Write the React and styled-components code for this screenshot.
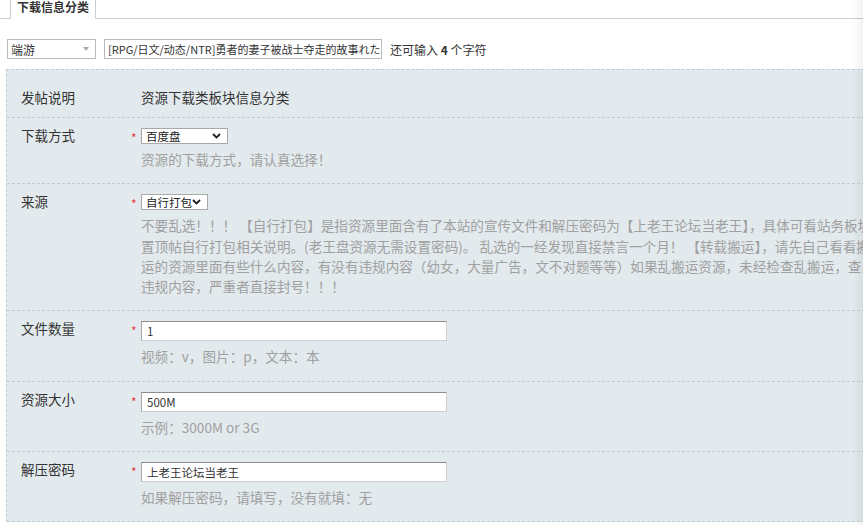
import React from 'react'
import styled, { createGlobalStyle } from 'styled-components'

const GlobalStyle = createGlobalStyle`
html, body {
  margin: 0;
  padding: 0;
  background: #fff;
  overflow: hidden;
}
body {
  font-family: "Noto Sans CJK SC", "Noto Sans", "Liberation Sans", sans-serif;
  color: #333;
}
`;

const Page = styled.div`
width: 1000px;
position: relative;
`;

const EdgeShade = styled.div`
position: fixed;
top: 0;
right: 0;
width: 10px;
height: 100%;
background: linear-gradient(to right, rgba(0,0,0,0), rgba(0,0,0,0.05));
pointer-events: none;
`;

const TabBar = styled.div`
display: flex;
margin-top: -7px;
padding-left: 10px;
border-bottom: 1px solid #cdcdcd;
`;

const Tab = styled.div`
background: #fff;
border: 1px solid #cdcdcd;
border-bottom: none;
margin-bottom: -1px;
padding: 0 6px;
line-height: 25px;
font-size: 12px;
font-weight: bold;
color: #333;
`;

const TitleRow = styled.div`
display: flex;
align-items: center;
gap: 8px;
padding: 20px 0 0 7px;
height: 20px;
`;

const TypeSelect = styled.div`
width: 78px;
height: 18px;
border: 1px solid #b9b9b9;
display: flex;
align-items: center;
justify-content: space-between;
padding: 0 6px 0 3px;
font-size: 12px;
color: #333;
background: #fff;
`;

const Caret = styled.span`
width: 0;
height: 0;
border-left: 3px solid transparent;
border-right: 3px solid transparent;
border-top: 4px solid #aaa;
`;

const TitleInput = styled.div`
width: 270px;
height: 18px;
padding: 0 3px;
border: 1px solid #b9b9b9;
font-size: 11px;
line-height: 18px;
white-space: nowrap;
overflow: hidden;
color: #333;
`;

const Counter = styled.span`
font-size: 12px;
color: #333;
b { font-weight: bold; }
`;

const Panel = styled.div`
margin: 10px 0 0 6px;
border-top: 1px dashed #c3ccd2;
border-left: 1px dashed #c3ccd2;
background: #e3eaee;
padding-top: 7px;
`;

const Row = styled.div`
display: grid;
grid-template-columns: 110px 10px 1fr;
padding: 10px 0 ${({ plain }) => (plain ? '10px' : '14px')} 14px;
border-bottom: 1px dashed #c3ccd2;
`;

const Label = styled.div`
font-size: 13.5px;
line-height: ${({ plain }) => (plain ? '20px' : '15px')};
color: #333;
`;

const Star = styled.span`
color: #e4393c;
font-size: 12px;
line-height: 14px;
padding-top: 3px;
`;

const Value = styled.div`
display: flex;
flex-direction: column;
align-items: flex-start;
font-size: 13.5px;
line-height: 20px;
color: #333;
`;

const SelectBox = styled.div`
width: ${({ w }) => w}px;
height: 16px;
box-sizing: border-box;
border: 1px solid #a9a9a9;
background: #fff;
display: flex;
align-items: center;
justify-content: space-between;
padding: 0 6px 0 4px;
font-size: 11.5px;
line-height: 14px;
color: #222;
white-space: nowrap;
`;

const Chevron = () => (
  <svg width="9" height="6" viewBox="0 0 9 6">
    <polyline points="1,1 4.5,4.5 8,1" fill="none" stroke="#222" strokeWidth="1.8" />
  </svg>
);

const TextInput = styled.input`
width: 306px;
height: 20px;
box-sizing: border-box;
border: 1px solid #d0d0d0;
border-top-color: #8c8c8c;
border-left-color: #a8a8a8;
font-size: 11.5px;
font-family: "Noto Sans CJK SC", sans-serif;
color: #333;
padding: 0 5px;
margin: 0;
outline: none;
`;

const Hint = styled.div`
margin-top: 5px;
font-size: 13.6px;
line-height: 20.3px;
height: ${({ lines = 1 }) => lines * 20.3}px;
color: #a0a0a0;
white-space: nowrap;
`;

const sourceNote = [
  '不要乱选！！！ 【自行打包】是指资源里面含有了本站的宣传文件和解压密码为【上老王论坛当老王】，具体可看站务板块',
  '置顶帖自行打包相关说明。(老王盘资源无需设置密码)。 乱选的一经发现直接禁言一个月！ 【转载搬运】，请先自己看看搬',
  '运的资源里面有些什么内容，有没有违规内容（幼女，大量广告，文不对题等等）如果乱搬运资源，未经检查乱搬运，查出',
  '违规内容，严重者直接封号！！！',
];

const fields = [
  { label: '文件数量', value: '1', hint: '视频：v，图片：p，文本：本' },
  { label: '资源大小', value: '500M', hint: '示例：3000M or 3G' },
  { label: '解压密码', value: '上老王论坛当老王', hint: '如果解压密码，请填写，没有就填：无' },
];

export default function App() {
  return (
    <Page>
      <GlobalStyle />
      <TabBar>
        <Tab>下载信息分类</Tab>
      </TabBar>
      <TitleRow>
        <TypeSelect>
          端游
          <Caret />
        </TypeSelect>
        <TitleInput>[RPG/日文/动态/NTR]勇者的妻子被战士夺走的故事れた鬪</TitleInput>
        <Counter>还可输入 <b>4</b> 个字符</Counter>
      </TitleRow>
      <Panel>
        <Row plain>
          <Label plain>发帖说明</Label>
          <span />
          <Value>资源下载类板块信息分类</Value>
        </Row>
        <Row>
          <Label>下载方式</Label>
          <Star>*</Star>
          <Value>
            <SelectBox w={87}>
              百度盘
              <Chevron />
            </SelectBox>
            <Hint>资源的下载方式，请认真选择！</Hint>
          </Value>
        </Row>
        <Row>
          <Label>来源</Label>
          <Star>*</Star>
          <Value>
            <SelectBox w={67}>
              自行打包
              <Chevron />
            </SelectBox>
            <Hint lines={sourceNote.length}>
              {sourceNote.map((line, i) => (
                <div key={i}>{line}</div>
              ))}
            </Hint>
          </Value>
        </Row>
        {fields.map((f) => (
          <Row key={f.label}>
            <Label>{f.label}</Label>
            <Star>*</Star>
            <Value>
              <TextInput defaultValue={f.value} />
              <Hint>{f.hint}</Hint>
            </Value>
          </Row>
        ))}
      </Panel>
      <EdgeShade />
    </Page>
  )
}
